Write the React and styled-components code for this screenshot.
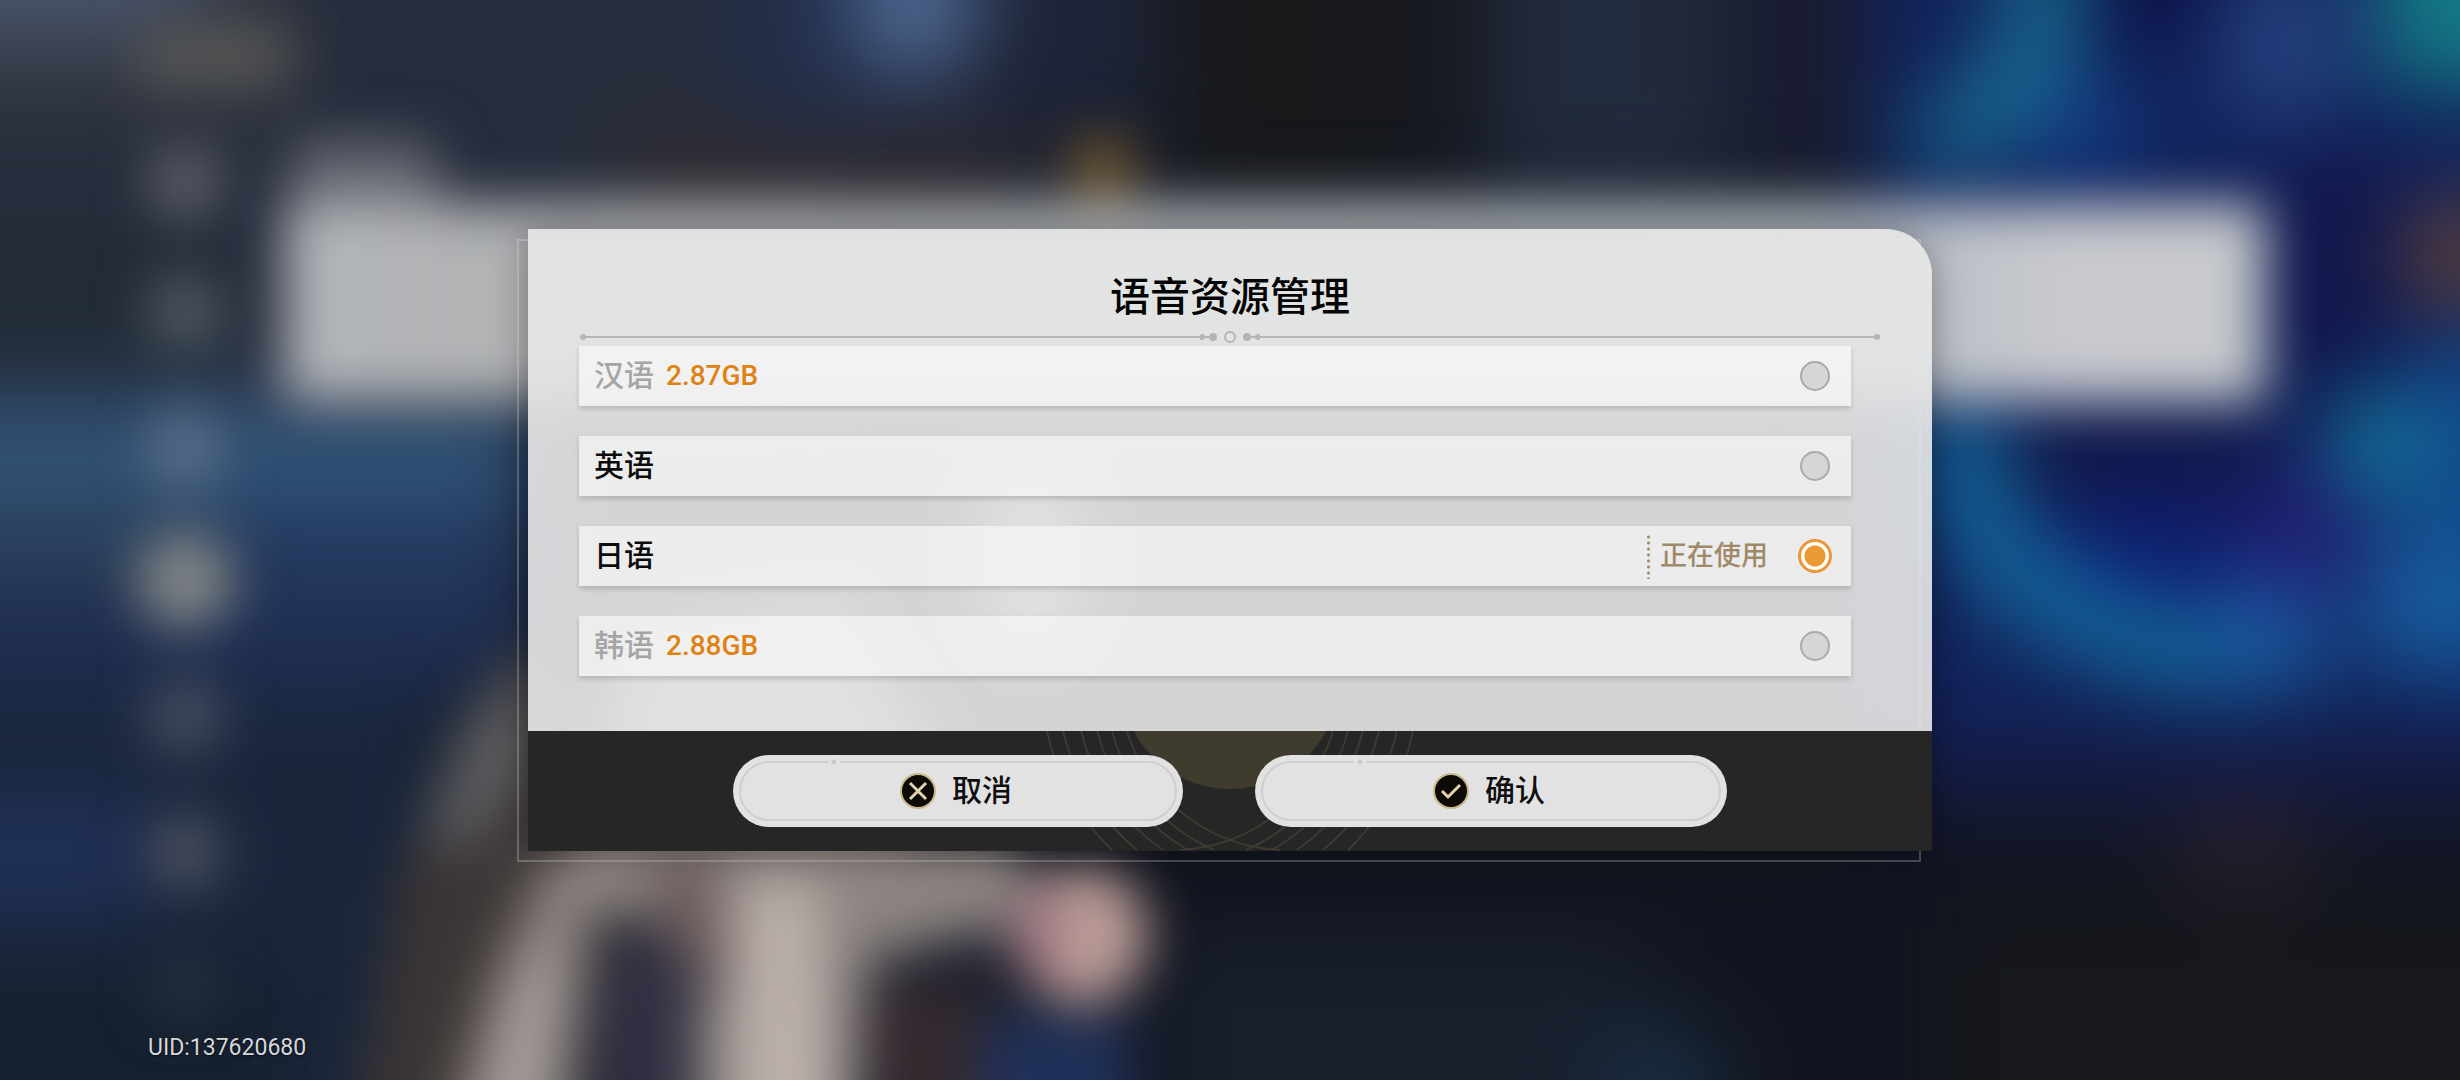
import React, { useState } from "react";
import styled, { createGlobalStyle } from "styled-components";

const GlobalStyle = createGlobalStyle`
  * {
    box-sizing: border-box;
  }
  body {
    margin: 0;
    background: #171d2b;
    font-family: Roboto, "Noto Sans CJK SC", sans-serif;
  }
`;

const Page = styled.div`
  position: relative;
  min-height: 100vh;
  display: grid;
  grid-template-rows: 1fr auto 1fr;
  overflow: hidden;
`;

const Scene = styled.svg`
  position: absolute;
  inset: 0;
  width: 100%;
  height: 100%;
`;

const Dialog = styled.form`
  position: relative;
  grid-row: 2;
  justify-self: center;
  width: min(1404px, 92vw);
`;

// thin outline that sits behind the dialog, shifted down and left
const Frame = styled.div`
  position: absolute;
  inset: 10px 11px -11px -11px;
  border: 2px solid rgba(255, 255, 255, 0.26);
`;

const Panel = styled.div`
  position: relative;
  border-radius: 0 46px 0 0;
  overflow: hidden;
`;

const Shade = styled.div`
  position: absolute;
  inset: 0;
  border-radius: 0 46px 0 0;
  box-shadow: 0 6px 36px rgba(0, 0, 0, 0.36);
`;

const Body = styled.div`
  padding: 42px 51px 55px;
  background: rgba(231, 231, 231, 0.91);
`;

const Title = styled.h1`
  margin: 0;
  font-size: 40px;
  line-height: 54px;
  font-weight: 500;
  text-align: center;
  color: #060606;
`;

const Divider = styled.div`
  display: flex;
  align-items: center;
  height: 16px;
  margin: 4px 0 1px;
  padding: 0 2px;
`;

const Line = styled.span`
  position: relative;
  flex: 1;
  height: 2px;
  background: #b4b5b5;

  &::before {
    content: "";
    position: absolute;
    top: -2px;
    ${(p) => p.$end}: -1px;
    width: 6px;
    height: 6px;
    border-radius: 50%;
    background: #b4b5b5;
  }
`;

const List = styled.ul`
  display: flex;
  flex-direction: column;
  gap: 30px;
  margin: 0 30px 0 0;
  padding: 0;
  list-style: none;
`;

const Row = styled.li`
  display: flex;
  align-items: center;
  height: 60px;
  padding: 0 20px 0 15px;
  background: rgba(255, 255, 255, 0.56);
  box-shadow: 0 3px 5px rgba(0, 0, 0, 0.16);
`;

const Name = styled.label`
  flex: 1;
  display: flex;
  align-items: center;
  gap: 12px;
  font-size: 30px;
  line-height: 44px;
  font-weight: 500;
  color: ${(p) => (p.$missing ? "#a5a5a5" : "#0c0c0c")};
`;

const Size = styled.span`
  font-size: 28px;
  color: #df8214;
`;

const InUse = styled.span`
  display: flex;
  align-items: center;
  gap: 10px;
  margin-right: 31px;
  font-size: 27px;
  line-height: 44px;
  font-weight: 500;
  color: #a08968;
`;

const Dots = styled.span`
  width: 3px;
  height: 45px;
  background: radial-gradient(circle, #a08968 1px, transparent 2px) 0 0 / 3px 6px;
`;

const Radio = styled.input`
  appearance: none;
  width: 30px;
  height: 30px;
  margin: 0 1px;
  border: 2px solid #aaaaaa;
  border-radius: 50%;
  background: #d6d6d6;
  cursor: pointer;

  &:checked {
    width: 34px;
    height: 34px;
    margin: 0 -1px;
    border: 3px solid #e6983a;
    background: radial-gradient(circle, #e99a33 10px, #fffdf6 11px);
  }
`;

const Footer = styled.div`
  position: relative;
  display: flex;
  gap: 72px;
  padding: 24px 205px;
  background: #262626;
`;

const Ornament = styled.svg`
  position: absolute;
  top: 0;
  left: 50%;
  margin-left: -200px;
`;

const Button = styled.button`
  position: relative;
  flex: ${(p) => p.$grow} 1 0;
  display: flex;
  align-items: center;
  justify-content: center;
  gap: 16px;
  height: 72px;
  padding: 0 4px 0 0;
  border: 0;
  border-radius: 36px;
  background: #e2e2e2;
  font-family: inherit;
  font-size: 30px;
  line-height: 44px;
  font-weight: 500;
  color: #0f0f0f;
  cursor: pointer;

  &::before {
    content: "";
    position: absolute;
    inset: 6px;
    border: 2px solid #cfcfcf;
    border-radius: 30px;
  }
`;

// breaks the inner outline of the button and leaves a dot there
const Notch = styled.span`
  position: absolute;
  top: 4px;
  left: 21%;
  width: 12px;
  height: 6px;
  background: radial-gradient(circle, #cbcbcb 2px, #e2e2e2 3px);
`;

const Uid = styled.p`
  position: relative;
  grid-row: 3;
  align-self: end;
  margin: 0;
  padding: 0 0 18px 148px;
  font-size: 23px;
  line-height: 28px;
  color: #d6d8dc;
  text-shadow: 0 1px 2px rgba(0, 0, 0, 0.7);
`;

const LANGUAGES = [
  { id: "zh", name: "汉语", size: "2.87GB" },
  { id: "en", name: "英语" },
  { id: "ja", name: "日语", inUse: true },
  { id: "ko", name: "韩语", size: "2.88GB" },
];

const MENU_GLOWS = [
  { y: 182, r: 38, fill: "#5c5f68" },
  { y: 312, r: 38, fill: "#515b63" },
  { y: 448, r: 38, fill: "#5d718a" },
  { y: 580, r: 48, fill: "#848888" },
  { y: 716, r: 38, fill: "#475062" },
  { y: 852, r: 38, fill: "#4d5260" },
  { y: 985, r: 34, fill: "#273040" },
];

// left-hand arcs: where they enter at the top of the footer, where they leave, radius
const ARCS = [
  [17, 82, 230],
  [33, 107, 218],
  [51, 133, 205],
  [67, 158, 193],
  [82, 184, 181],
  [97, 250, 168],
];

const Backdrop = () => (
  <Scene viewBox="0 0 2460 1080" preserveAspectRatio="xMidYMid slice" aria-hidden="true">
    <defs>
      <filter id="soft" filterUnits="userSpaceOnUse" x="-200" y="-200" width="2860" height="1480" colorInterpolationFilters="sRGB">
        <feGaussianBlur stdDeviation="42" />
      </filter>
      <filter id="mid" filterUnits="userSpaceOnUse" x="-200" y="-200" width="2860" height="1480" colorInterpolationFilters="sRGB">
        <feGaussianBlur stdDeviation="26" />
      </filter>
      <linearGradient id="bar" x1="0" x2="1">
        <stop offset="0" stopColor="#b3b6bb" />
        <stop offset="0.12" stopColor="#b1b2b3" />
        <stop offset="0.8" stopColor="#b4bbc2" />
        <stop offset="0.9" stopColor="#c9cacf" />
        <stop offset="1" stopColor="#c8cacd" />
      </linearGradient>
    </defs>
    <rect width="2460" height="1080" fill="#181e2b" />
    <g filter="url(#soft)">
      <rect x="-200" y="-200" width="1040" height="600" fill="#262c3c" />
      <rect x="-200" y="-200" width="500" height="330" fill="#30353f" />
      <rect x="-200" y="-200" width="400" height="240" fill="#4a546c" />
      <rect x="-200" y="230" width="420" height="140" fill="#222b37" />
      <rect x="740" y="-200" width="120" height="340" fill="#222e4b" />
      <rect x="620" y="130" width="420" height="90" fill="#302c30" />
      <rect x="860" y="-200" width="300" height="340" fill="#1e2438" />
      <ellipse cx="915" cy="0" rx="64" ry="82" fill="#4f6a94" />
      <rect x="1170" y="-200" width="200" height="400" fill="#17181a" />
      <rect x="1370" y="-200" width="120" height="400" fill="#15181f" />
      <rect x="1490" y="-200" width="230" height="390" fill="#222b3d" />
      <rect x="1740" y="-200" width="120" height="370" fill="#1a1c32" />

      <rect x="-200" y="400" width="740" height="110" fill="#32557a" />
      <rect x="-200" y="490" width="420" height="100" fill="#2c425f" />
      <rect x="220" y="500" width="320" height="120" fill="#24395f" />
      <rect x="-200" y="600" width="730" height="90" fill="#1f2e52" />
      <rect x="-200" y="690" width="640" height="500" fill="#1a263c" />
      <rect x="-200" y="800" width="350" height="110" fill="#20315a" />
      <rect x="-200" y="960" width="500" height="250" fill="#16202f" />

      <rect x="1870" y="-200" width="800" height="940" fill="#12235c" />
      <rect x="2090" y="-200" width="110" height="240" fill="#0c1046" />
      <path d="M2050 -80 L2040 60 L1930 160" fill="none" stroke="#187496" strokeWidth="66" />
      <ellipse cx="2080" cy="130" rx="50" ry="50" fill="#123e88" />
      <ellipse cx="2285" cy="45" rx="60" ry="80" fill="#264280" />
      <rect x="2380" y="-200" width="280" height="285" fill="#137a86" />
      <rect x="2270" y="150" width="130" height="240" fill="#12174c" />
      <ellipse cx="2460" cy="255" rx="55" ry="55" fill="#614336" />
      <rect x="2410" y="350" width="260" height="330" fill="#124a8c" />
      <rect x="2010" y="430" width="250" height="60" fill="#12143c" />
      <ellipse cx="2150" cy="540" rx="100" ry="60" fill="#0f1e70" />
      <ellipse cx="2300" cy="540" rx="60" ry="70" fill="#221e74" />
      <path d="M1950 400 C1970 520 2000 580 2080 615 C2150 650 2240 670 2320 640" fill="none" stroke="#1276aa" strokeWidth="64" />
      <ellipse cx="2265" cy="630" rx="55" ry="50" fill="#1b5ca6" />
      <ellipse cx="2378" cy="445" rx="46" ry="56" fill="#117a9e" />
      <ellipse cx="2420" cy="600" rx="60" ry="70" fill="#175ea0" />
      <rect x="1860" y="740" width="800" height="90" fill="#151a40" />
      <rect x="1100" y="820" width="1560" height="400" fill="#12151f" />
      <rect x="1960" y="930" width="700" height="280" fill="#17181b" />
      <ellipse cx="2245" cy="850" rx="70" ry="40" fill="#2a222b" />
      <rect x="1160" y="940" width="480" height="260" fill="#181f2d" />
      <ellipse cx="1660" cy="1100" rx="60" ry="80" fill="#192f44" />
    </g>
    <g filter="url(#mid)">
      <rect x="140" y="28" width="150" height="56" fill="#585856" />
      {MENU_GLOWS.map((g) => (
        <circle key={g.y} cx="185" cy={g.y} r={g.r} fill={g.fill} />
      ))}
      <path d="M550 640 L470 760 L400 870 L340 1200 L560 1200 L640 800 Z" fill="#3b3535" />
      <path d="M530 640 L460 730 L420 840 L470 850 L540 760 Z" fill="#5c5c5f" />
      <path d="M620 640 L840 600 L940 760 L900 850 L580 860 Z" fill="#a59a95" />
      <ellipse cx="1030" cy="560" rx="60" ry="90" fill="#8494a4" />
      <path d="M560 830 L1020 830 L1030 920 L870 960 L850 1200 L700 1200 L690 930 L590 910 L550 1200 L430 1200 L500 960 Z" fill="#8e8582" />
      <path d="M570 930 L500 1000 L460 1200 L560 1200 Z" fill="#a39b98" />
      <path d="M740 880 L820 880 L840 1200 L730 1200 Z" fill="#bbb0ab" />
      <path d="M600 960 L680 930 L720 965 L695 1010 L700 1200 L590 1200 Z" fill="#302f42" />
      <path d="M650 850 L715 860 L725 990 L670 960 Z" fill="#6b5b5b" />
      <rect x="875" y="985" width="110" height="220" fill="#35292f" />
      <rect x="980" y="1020" width="150" height="200" fill="#20315a" />
      <ellipse cx="1082" cy="935" rx="66" ry="70" fill="#be9f9a" />
      <ellipse cx="1040" cy="935" rx="30" ry="46" fill="#a57c87" />
      <circle cx="1103" cy="168" r="34" fill="#70552d" />
      <path d="M295 140 L430 140 L445 210 L288 210 Z" fill="#666872" />
      <path d="M284 204 L2265 204 L2265 402 L284 402 Z" fill="url(#bar)" />
    </g>
  </Scene>
);

const FooterOrnament = () => (
  <Ornament width="400" height="120" viewBox="0 0 400 120" fill="none" aria-hidden="true">
    <circle cx="200" cy="-51" r="109" fill="#403c2d" />
    {ARCS.map(([from, to, r]) => (
      <g key={from} stroke="#3d3a2f" strokeWidth="2">
        <path d={`M${from} 0 A${r} ${r} 0 0 0 ${to} 119`} />
        <path d={`M${400 - from} 0 A${r} ${r} 0 0 1 ${400 - to} 119`} />
      </g>
    ))}
  </Ornament>
);

const RoundIcon = ({ children }) => (
  <svg width="36" height="36" viewBox="0 0 36 36" fill="none" aria-hidden="true">
    <circle cx="18" cy="18" r="17" fill="#0d0b06" stroke="#cdb88d" strokeWidth="2" />
    <g stroke="#e3d3ae" strokeWidth="3">{children}</g>
  </svg>
);

const App = () => {
  const [selected, setSelected] = useState("ja");

  return (
    <Page>
      <GlobalStyle />
      <Backdrop />
      <Dialog onSubmit={(e) => e.preventDefault()}>
        <Frame />
        <Shade />
        <Panel>
          <Body>
            <Title>语音资源管理</Title>
            <Divider>
              <Line $end="left" />
              <svg width="60" height="16" viewBox="0 0 60 16" fill="#b4b5b5" aria-hidden="true">
                <path d="M0 7h14v2H0zM46 7h14v2H46z" />
                <circle cx="2" cy="8" r="3" />
                <circle cx="13" cy="8" r="4" />
                <circle cx="30" cy="8" r="5" fill="none" stroke="#b4b5b5" strokeWidth="2" />
                <circle cx="47" cy="8" r="4" />
                <circle cx="58" cy="8" r="3" />
              </svg>
              <Line $end="right" />
            </Divider>
            <List>
              {LANGUAGES.map((lang) => (
                <Row key={lang.id}>
                  <Name htmlFor={lang.id} $missing={!!lang.size}>
                    {lang.name}
                    {lang.size && <Size>{lang.size}</Size>}
                  </Name>
                  {lang.inUse && (
                    <InUse>
                      <Dots />
                      正在使用
                    </InUse>
                  )}
                  <Radio
                    type="radio"
                    name="language"
                    id={lang.id}
                    checked={selected === lang.id}
                    onChange={() => setSelected(lang.id)}
                  />
                </Row>
              ))}
            </List>
          </Body>
          <Footer>
            <FooterOrnament />
            <Button type="button" $grow={450}>
              <Notch />
              <RoundIcon>
                <path d="M10 10 L26 26 M26 10 L10 26" />
              </RoundIcon>
              取消
            </Button>
            <Button type="submit" $grow={472}>
              <Notch />
              <RoundIcon>
                <path d="M9 18 L15 24 L27 12" />
              </RoundIcon>
              确认
            </Button>
          </Footer>
        </Panel>
      </Dialog>
      <Uid>UID:137620680</Uid>
    </Page>
  );
};

export default App;
